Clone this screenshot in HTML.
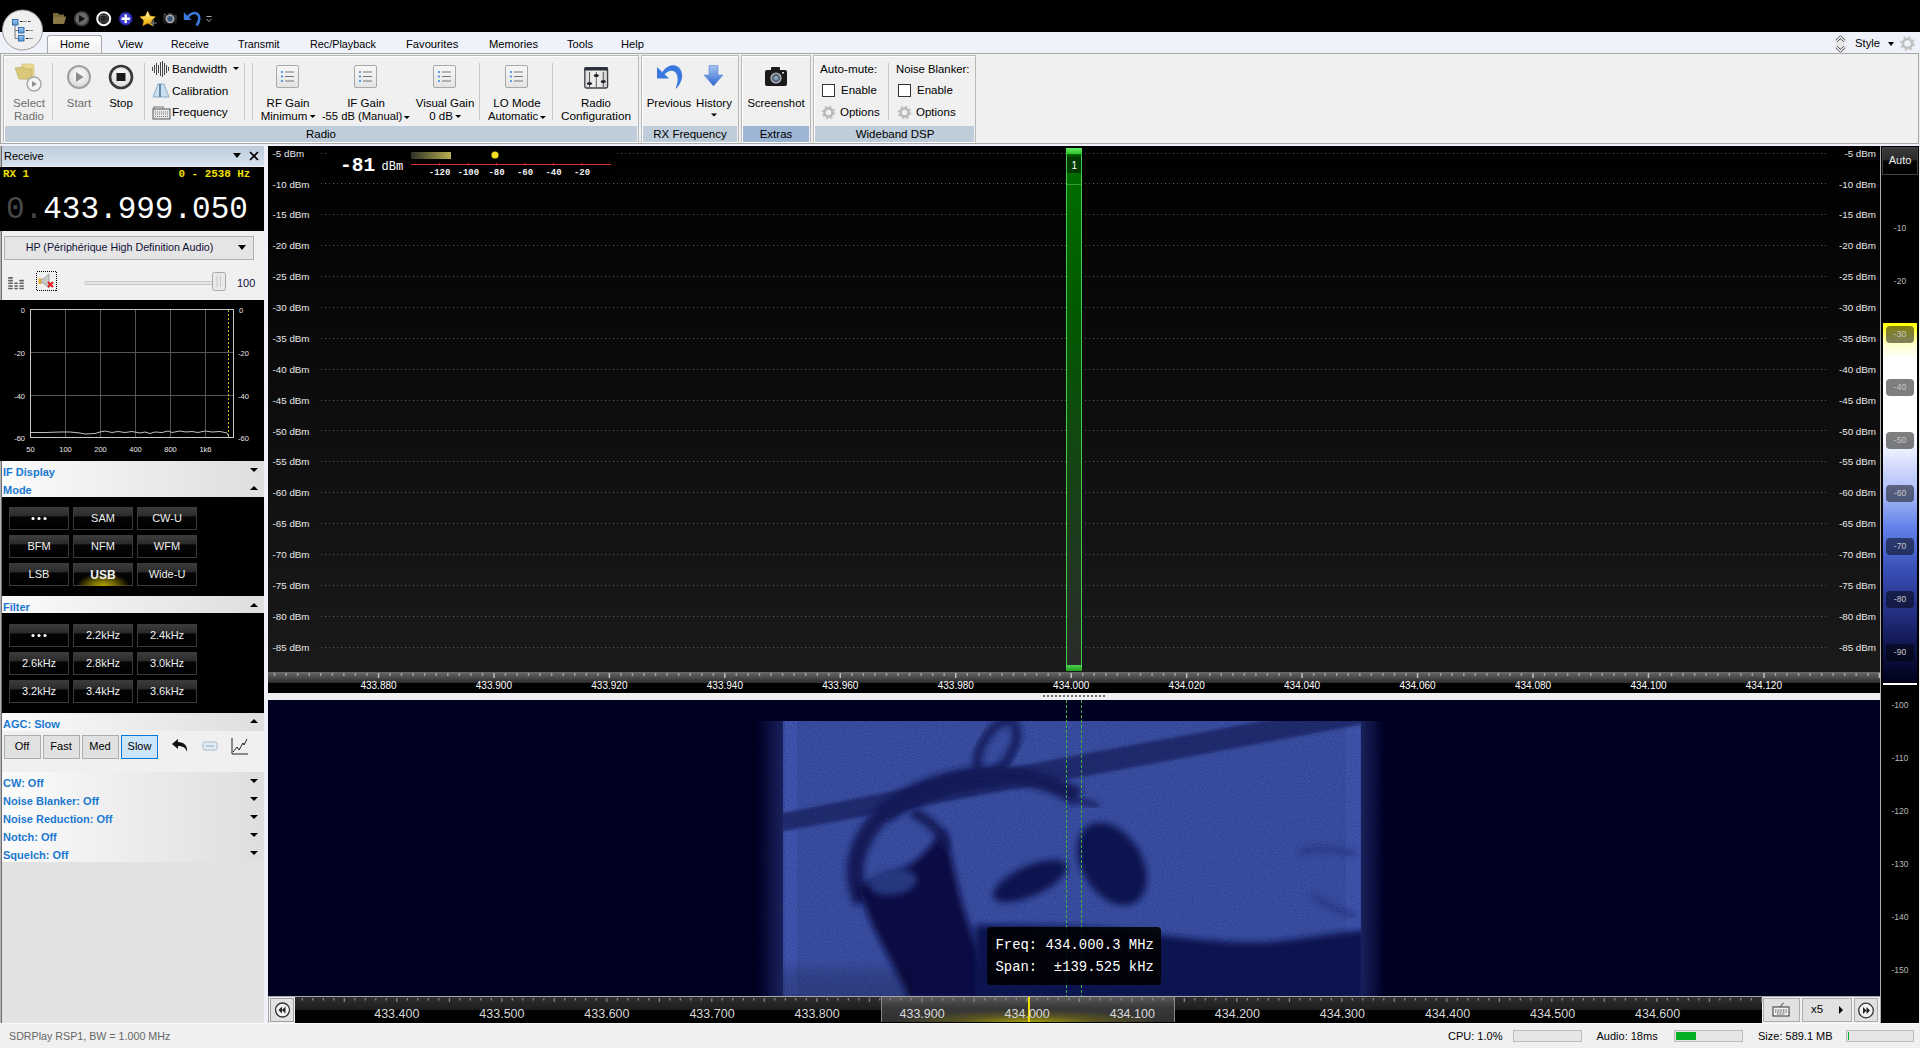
<!DOCTYPE html>
<html><head><meta charset="utf-8">
<style>
*{margin:0;padding:0;box-sizing:border-box}
html,body{width:1920px;height:1048px;overflow:hidden;background:#f0f0f0;font-family:"Liberation Sans",sans-serif;font-size:11.3px;color:#000}
.a{position:absolute}
.t{position:absolute;white-space:nowrap;line-height:1}
.c{transform:translateX(-50%)}
.mono{font-family:"Liberation Mono",monospace}
svg{position:absolute;overflow:visible}
#title{left:0;top:0;width:1920px;height:32px;background:#000}
#tabs{left:0;top:32px;width:1920px;height:21px;background:#eff2fb}
#ribbon{left:0;top:53px;width:1919px;height:91px;background:#f0f0f0;border:1px solid #a8a8a8}
.grp{position:absolute;top:1px;height:88px;border:1px solid #b8b8b8;border-bottom-color:#fff;box-shadow:inset 1px 1px 0 #fff}
.band{position:absolute;left:1px;right:1px;bottom:0;height:16px;background:#bfcddb;text-align:center;font-size:11.3px;line-height:15px}
.vsep{position:absolute;top:9px;width:1px;height:57px;background:#c8c8c8}
.arr{display:inline-block;width:0;height:0;border-left:3px solid transparent;border-right:3px solid transparent;border-top:3px solid #000;vertical-align:middle;margin-left:2px}
#left{left:0;top:146px;width:265px;height:879px;background:#f0f0f0}
#spec{left:268px;top:146px;width:1612px;height:526px;background:linear-gradient(#000 0%,#1a1a1a 100%)}
#fscale{left:268px;top:672px;width:1612px;height:21px;background:#000}
#sep{left:268px;top:693px;width:1612px;height:7px;background:#f0f0f0}
#wf{left:268px;top:700px;width:1612px;height:296px;background:#000020;overflow:hidden}
#bbar{left:268px;top:996px;width:1612px;height:27px;background:#f0f0f0}
#rcol{left:1881px;top:146px;width:38px;height:877px;background:#000}
#status{left:0;top:1023px;width:1920px;height:25px;background:#f0f0f0}
.mb{width:60px;height:23px;border:1px solid #3a3a3a;background:linear-gradient(#3c3c3c 0%,#2a2a2a 38%,#050505 42%,#000 100%)}
.ab{height:24px;background:#e1e1e1;border:1px solid #adadad}
</style></head><body>
<div id="title" class="a">
 <!-- quick access -->
 <svg style="left:50px;top:10px" width="170" height="20">
  <path d="M3 3 h5 l1 1.5 h5 v2 h2 l-2 7.5 H3z" fill="#7a6a40"/>
  <path d="M4 7 h12 l-2 6.5 H3z" fill="#8a7a48"/>
  <circle cx="31.7" cy="8.7" r="7" fill="#6a6a6a" stroke="#3a3a3a" stroke-width="1.5"/>
  <path d="M29 5 L35 8.7 L29 12.4z" fill="#111"/>
  <circle cx="53.7" cy="8.7" r="6.5" fill="#222" stroke="#fff" stroke-width="2"/>
  <rect x="50.5" y="5.5" width="6.5" height="6.5" fill="#222" stroke="#777" stroke-width="0.5"/>
  <circle cx="75.7" cy="8.7" r="6.5" fill="#3a3ac8" stroke="#1a1a80" stroke-width="1"/>
  <path d="M75.7 4.5 v8.4 M71.5 8.7 h8.4" stroke="#fff" stroke-width="2.4"/>
  <defs><linearGradient id="stg" x1="0" y1="0" x2="0" y2="1"><stop offset="0" stop-color="#fffbe8"/><stop offset="0.5" stop-color="#f8d040"/><stop offset="1" stop-color="#f0a000"/></linearGradient>
  <radialGradient id="cmg" cx="50%" cy="30%" r="70%"><stop offset="0" stop-color="#555"/><stop offset="1" stop-color="#111"/></radialGradient></defs>
  <path d="M97.7 1 l2.4 5 5.4 0.7 -3.9 3.8 1 5.3 -4.9 -2.6 -4.9 2.6 1 -5.3 -3.9 -3.8 5.4 -0.7z" fill="url(#stg)" stroke="#d89000" stroke-width="0.5"/>
  <path d="M100 13 h6.5 M103.2 9.8 v6.5" stroke="#6a6a6a" stroke-width="1.6"/>
  <rect x="113.2" y="4.4" width="13.7" height="9.7" rx="1.2" fill="url(#cmg)"/>
  <rect x="118" y="2.9" width="4.5" height="2" fill="#333"/>
  <rect x="113.8" y="3.8" width="2" height="1" fill="#666"/>
  <circle cx="120" cy="8.8" r="3.6" fill="#3a5a7a" stroke="#b0b0b0" stroke-width="1.5"/>
  <path d="M133.8 2.2 V9.9 H141.5z" fill="#3a7ae0"/>
  <path d="M137.5 7.5 C140 3.5 145 1.5 148 4.5 C150.5 7.5 149 12 146.5 15.5" fill="none" stroke="#3a7ae0" stroke-width="2.6"/>
  <path d="M156.5 6.5 h5 M156.5 9 l2.5 2.5 2.5 -2.5" stroke="#bbb" fill="none" stroke-width="0.9"/>
 </svg>
</div>
<div id="tabs" class="a">
 <div class="a" style="left:47px;top:3px;width:55px;height:19px;background:linear-gradient(#fff,#f0f0f0);border:1px solid #a8a8a8;border-bottom:none;border-radius:3px 3px 0 0"></div>
 <div class="t" style="left:60px;top:7px;font-size:11.1px">Home</div>
 <div class="t" style="left:118px;top:7px;font-size:11.5px">View</div>
 <div class="t" style="left:171px;top:7px;font-size:10.5px">Receive</div>
 <div class="t" style="left:238px;top:7px;font-size:10.8px">Transmit</div>
 <div class="t" style="left:310px;top:7px;font-size:10.8px">Rec/Playback</div>
 <div class="t" style="left:406px;top:7px;font-size:11.2px">Favourites</div>
 <div class="t" style="left:489px;top:7px;font-size:11.2px">Memories</div>
 <div class="t" style="left:567px;top:7px;font-size:11.2px">Tools</div>
 <div class="t" style="left:621px;top:7px;font-size:11.2px">Help</div>
 <svg style="left:1833px;top:2px" width="16" height="20">
  <ellipse cx="7.5" cy="10" rx="5" ry="8" fill="#e6e6ea"/>
  <path d="M3.5 7 L7.5 3 L11.5 7 M3.5 13 L7.5 17 L11.5 13" stroke="#444" fill="none" stroke-width="2.6" stroke-linejoin="round"/>
  <path d="M3.5 7 L7.5 3 L11.5 7 M3.5 13 L7.5 17 L11.5 13" stroke="#fff" fill="none" stroke-width="1.2" stroke-linejoin="round"/>
 </svg>
 <div class="t" style="left:1855px;top:6px;font-size:11.3px">Style</div>
 <div class="a" style="left:1888px;top:10px;border-left:3.5px solid transparent;border-right:3.5px solid transparent;border-top:4px solid #000"></div>
 <svg style="left:1899px;top:3px" width="18" height="18">
  <circle cx="8.5" cy="8.5" r="5.5" fill="none" stroke="#c8c8c8" stroke-width="4" stroke-dasharray="2.2 2.1"/>
  <circle cx="8.5" cy="8.5" r="4.5" fill="none" stroke="#c0c0c0" stroke-width="2.5"/>
 </svg>
</div>
<div class="a" style="left:0;top:0;z-index:5">
 <!-- app button -->
 <svg style="left:0;top:0" width="50" height="54">
  <defs><linearGradient id="sq" x1="0" y1="0" x2="0" y2="1"><stop offset="0" stop-color="#9cc8f0"/><stop offset="1" stop-color="#5a9ad8"/></linearGradient></defs>
  <circle cx="22.5" cy="30" r="20" fill="#efefef" stroke="#9a9a9a" stroke-width="1"/>
  <path d="M15 25 V38.5 H18.5 M15 30.5 H18.5" stroke="#666" fill="none" stroke-width="0.9"/>
  <rect x="12.5" y="19.5" width="5.5" height="5.5" fill="url(#sq)" stroke="#2a64a8" stroke-width="0.9"/>
  <rect x="18.5" y="27.5" width="5.5" height="5.5" fill="url(#sq)" stroke="#2a64a8" stroke-width="0.9"/>
  <rect x="18.5" y="35.5" width="5.5" height="5.5" fill="url(#sq)" stroke="#2a64a8" stroke-width="0.9"/>
  <path d="M20 21.5 H27 M28 21.5 H31 M26 30.5 H33 M26 38.5 H33" stroke="#777" fill="none" stroke-width="0.8"/>
  <path d="M20 21.5 H22 M28 21.5 H29.5 M26 30.5 H28 M26 38.5 H28" stroke="#222" fill="none" stroke-width="1"/>
 </svg>
</div>
<div id="ribbon" class="a"></div>
<div class="a" style="left:0;top:144px;width:1920px;height:2px;background:#eef0fa"></div>
<!-- groups -->
<div class="grp" style="left:3px;top:55px;width:636px"><div class="band"></div></div>
<div class="grp" style="left:641px;top:55px;width:98px"><div class="band"></div></div>
<div class="grp" style="left:741px;top:55px;width:70px"><div class="band" style="background:#9db6d4"></div></div>
<div class="grp" style="left:813px;top:55px;width:163px"><div class="band"></div></div>
<div class="t c" style="left:321px;top:129px;font-size:11.5px">Radio</div>
<div class="t c" style="left:690px;top:129px;font-size:11.5px">RX Frequency</div>
<div class="t c" style="left:776px;top:129px;font-size:11.5px">Extras</div>
<div class="t c" style="left:895px;top:129px;font-size:11.5px">Wideband DSP</div>
<div class="vsep" style="left:52px;top:63px"></div>
<div class="vsep" style="left:144px;top:63px"></div>
<div class="vsep" style="left:244px;top:63px"></div>
<div class="vsep" style="left:252px;top:63px"></div>
<div class="vsep" style="left:479px;top:63px"></div>
<div class="vsep" style="left:552px;top:63px"></div>
<div class="vsep" style="left:888px;top:63px"></div>
<!-- Select Radio -->
<svg style="left:14px;top:62px" width="30" height="30">
 <path d="M8 2 h10 l2 1 v14 H8z" fill="#e8d890" stroke="#c8b870" stroke-width="0.6"/>
 <path d="M1 6 l8 -1 3 2 H18 v10 H5z" fill="#d8c878" stroke="#b8a860" stroke-width="0.6"/>
 <circle cx="20" cy="22" r="7" fill="#f4f4f4" stroke="#a8a8a8" stroke-width="1.5"/>
 <path d="M18 19 l5 3 -5 3z" fill="#909090"/>
</svg>
<div class="t c" style="left:29px;top:98px;font-size:11.5px;color:#6d6d6d">Select</div>
<div class="t c" style="left:29px;top:111px;font-size:11.5px;color:#6d6d6d">Radio</div>
<!-- Start / Stop -->
<svg style="left:66px;top:64px" width="26" height="26">
 <defs><radialGradient id="gs" cx="50%" cy="40%" r="60%"><stop offset="0" stop-color="#fff"/><stop offset="1" stop-color="#d8d8d8"/></radialGradient></defs>
 <circle cx="13" cy="13" r="11" fill="url(#gs)" stroke="#a0a0a0" stroke-width="2"/>
 <path d="M10 8 l7.5 5 -7.5 5z" fill="#8a8a8a"/>
</svg>
<div class="t c" style="left:79px;top:98px;font-size:11.5px;color:#6d6d6d">Start</div>
<svg style="left:108px;top:64px" width="26" height="26">
 <circle cx="13" cy="13" r="11" fill="url(#gs)" stroke="#383838" stroke-width="2.6"/>
 <rect x="8.5" y="9" width="9" height="8" fill="#1a1a1a"/>
</svg>
<div class="t c" style="left:121px;top:98px;font-size:11.5px">Stop</div>
<!-- Bandwidth / Calibration / Frequency -->
<svg style="left:152px;top:61px" width="20" height="60">
 <path d="M0.5 6 v4 M2.5 4 v8 M4.5 2 v12 M6.5 4 v8 M8.5 1 v14 M10.5 0 v16 M12.5 2 v12 M14.5 4 v8 M16.5 6 v4" stroke="#333" stroke-width="0.9"/>
 <path d="M1 36 l5 -13 h6 l5 13z" fill="#c8e0f0" stroke="#7aa0c0" stroke-width="0.8"/>
 <path d="M8 23 v13" stroke="#4a7090" stroke-width="1.5"/>
 <rect x="1" y="48" width="17" height="10" fill="#e8e8e8" stroke="#555" stroke-width="1"/>
 <path d="M3 51 h13 M3 53 h13 M3 55.5 h13" stroke="#777" stroke-width="1" stroke-dasharray="1 1"/>
 <path d="M2 48 v-2 h9 v2" stroke="#777" fill="none" stroke-width="1.2"/>
</svg>
<div class="t" style="left:172px;top:63.5px;font-size:11.8px">Bandwidth</div>
<div class="a" style="left:233px;top:67px;border-left:3px solid transparent;border-right:3px solid transparent;border-top:3.5px solid #000"></div>
<div class="t" style="left:172px;top:86px;font-size:11.8px">Calibration</div>
<div class="t" style="left:172px;top:107px;font-size:11.8px">Frequency</div>
<!-- list icons -->
<svg style="left:276px;top:65px" width="350" height="24">
 <defs><linearGradient id="li" x1="0" y1="0" x2="0" y2="1"><stop offset="0" stop-color="#f8f8f8"/><stop offset="1" stop-color="#e4e4e4"/></linearGradient>
 <g id="lic"><rect x="0.5" y="0.5" width="22" height="22" rx="1.5" fill="url(#li)" stroke="#a8a8a8"/><circle cx="6" cy="7" r="1.1" fill="#3a8ae0"/><circle cx="6" cy="11.5" r="1.1" fill="#3a8ae0"/><circle cx="6" cy="16" r="1.1" fill="#3a8ae0"/><path d="M9 7 h9 M9 11.5 h9 M9 16 h9" stroke="#777" stroke-width="1"/></g></defs>
 <use href="#lic" x="0" y="0"/>
 <use href="#lic" x="78" y="0"/>
 <use href="#lic" x="157" y="0"/>
 <use href="#lic" x="229" y="0"/>
 <defs><linearGradient id="rc" x1="0" x2="1"><stop offset="0" stop-color="#d8d8d8"/><stop offset="0.5" stop-color="#f4f4f4"/><stop offset="1" stop-color="#d0d0d0"/></linearGradient></defs>
 <rect x="308.8" y="2.6" width="22.8" height="20.4" rx="1.5" fill="url(#rc)" stroke="#3a3f48" stroke-width="1.3"/>
 <rect x="308.5" y="2.2" width="23.4" height="3.2" rx="1" fill="#2a3038"/>
 <path d="M313.5 7 v15 M320.3 7 v15 M327.3 7 v15" stroke="#444" stroke-width="0.9"/>
 <ellipse cx="313.5" cy="18.5" rx="2.6" ry="1.6" fill="#222"/>
 <ellipse cx="320.3" cy="10.5" rx="2.6" ry="1.6" fill="#222"/>
 <ellipse cx="327.3" cy="16.5" rx="2.6" ry="1.6" fill="#222"/>
</svg>
<div class="t c" style="left:288px;top:98px;font-size:11.5px">RF Gain</div>
<div class="t c" style="left:288px;top:111px;font-size:11.5px">Minimum<span class="arr"></span></div>
<div class="t c" style="left:366px;top:98px;font-size:11.5px">IF Gain</div>
<div class="t c" style="left:366px;top:111px;font-size:11.2px">-55 dB (Manual)<span class="arr"></span></div>
<div class="t c" style="left:445px;top:98px;font-size:11.5px">Visual Gain</div>
<div class="t c" style="left:445px;top:111px;font-size:11.5px">0 dB<span class="arr"></span></div>
<div class="t c" style="left:517px;top:98px;font-size:11.5px">LO Mode</div>
<div class="t c" style="left:517px;top:111px;font-size:11.3px">Automatic<span class="arr"></span></div>
<div class="t c" style="left:596px;top:98px;font-size:11.5px">Radio</div>
<div class="t c" style="left:596px;top:111px;font-size:11.8px">Configuration</div>
<!-- RX Frequency -->
<svg style="left:654px;top:63px" width="75" height="60">
 <defs><linearGradient id="hg" x1="0" y1="0" x2="0" y2="1"><stop offset="0" stop-color="#a8c4f0"/><stop offset="1" stop-color="#2a68d0"/></linearGradient></defs>
 <path d="M3 4 V15.5 H15z" fill="#3a7ae0"/>
 <path d="M7 12 C10 4 16 1.8 20 2.2 C26 3 29 9 28 15 C27 20 24 24 21.5 26 C23.5 21 24.5 15 22.5 11 C20.5 7 15.5 6.5 11 11 Z" fill="#3a7ae0"/>
 <path d="M55 2.5 h9 v9.5 h5 l-9.5 11 -9.5 -11 h5z" fill="url(#hg)" stroke="#5a88d0" stroke-width="0.6"/>
 <path d="M57 50.5 h6 l-3 3z" fill="#000"/>
</svg>
<div class="t c" style="left:669px;top:98px;font-size:11.5px">Previous</div>
<div class="t c" style="left:714px;top:98px;font-size:11.5px">History</div>
<!-- Extras -->
<svg style="left:764px;top:66px" width="26" height="22">
 <rect x="1" y="4" width="22" height="16" rx="2" fill="#1a1a1a"/>
 <rect x="7" y="1" width="9" height="4" rx="1" fill="#1a1a1a"/>
 <circle cx="12" cy="12" r="5" fill="#5a6a7a" stroke="#c0c0c0" stroke-width="1.2"/>
 <circle cx="12" cy="12" r="2" fill="#8aa8c8"/>
 <rect x="18" y="6" width="2" height="1.5" fill="#ddd"/>
</svg>
<div class="t c" style="left:776px;top:98px;font-size:11.3px">Screenshot</div>
<!-- Wideband DSP -->
<div class="t" style="left:820px;top:63px;font-size:11.7px">Auto-mute:</div>
<div class="a" style="left:822px;top:84px;width:13px;height:13px;background:#fff;border:1px solid #333"></div>
<div class="t" style="left:841px;top:85.3px;font-size:11.5px">Enable</div>
<div class="t" style="left:840px;top:107.3px;font-size:11.5px">Options</div>
<div class="t" style="left:896px;top:64px;font-size:11.3px">Noise Blanker:</div>
<div class="a" style="left:898px;top:84px;width:13px;height:13px;background:#fff;border:1px solid #333"></div>
<div class="t" style="left:917px;top:85.3px;font-size:11.5px">Enable</div>
<div class="t" style="left:916px;top:107.3px;font-size:11.5px">Options</div>
<svg style="left:821px;top:105px" width="100" height="16">
 <g id="gear"><circle cx="7.5" cy="7.5" r="5" fill="none" stroke="#c4c4c4" stroke-width="3.6" stroke-dasharray="2.1 1.8"/><circle cx="7.5" cy="7.5" r="4" fill="none" stroke="#b8b8b8" stroke-width="2.4"/></g>
 <use href="#gear" x="76" y="0"/>
</svg>
<div id="left" class="a"></div>
<div class="a" style="left:0;top:146px;width:1px;height:877px;background:#b4b4b4"></div><div class="a" style="left:1px;top:146px;width:1px;height:877px;background:#6e6e6e"></div>
<div class="a" style="left:264px;top:146px;width:4px;height:877px;background:#eef0fa"></div>
<!-- Receive header -->
<div class="a" style="left:2px;top:146px;width:262px;height:20px;background:linear-gradient(#bdcbd9,#d6e2ee)"></div>
<div class="t" style="left:4px;top:150.5px;font-size:11px">Receive</div>
<div class="a" style="left:233px;top:153px;border-left:4.5px solid transparent;border-right:4.5px solid transparent;border-top:5px solid #000"></div>
<svg style="left:249px;top:151px" width="10" height="10"><path d="M1 1 L9 9 M9 1 L1 9" stroke="#000" stroke-width="1.6"/></svg>
<!-- RX display -->
<div class="a" style="left:0;top:167px;width:264px;height:64px;background:#000"></div>
<div class="t mono" style="left:3px;top:168.5px;font-size:10.8px;font-weight:bold;color:#f0e000">RX 1</div>
<div class="t mono" style="left:178.5px;top:168.5px;font-size:10.9px;font-weight:bold;color:#f0e000">0 - 2538 Hz</div>
<div class="t mono" style="left:6px;top:194px;font-size:31px;color:#fff;letter-spacing:0"><span style="color:#484848">0.</span>433.999.050</div>
<!-- audio dropdown -->
<div class="a" style="left:4px;top:236px;width:250px;height:24px;background:#e5e5e5;border:1px solid #adadad"></div>
<div class="t c" style="left:119.5px;top:242px;font-size:10.7px;color:#101038">HP (Périphérique High Definition Audio)</div>
<div class="a" style="left:238px;top:245px;border-left:4.5px solid transparent;border-right:4.5px solid transparent;border-top:5px solid #000"></div>
<!-- icons row -->
<svg style="left:7px;top:270px" width="250" height="24">
 <rect x="1.0" y="7.1" width="5.0" height="1.6" rx="0.8" fill="#606060"/>
 <rect x="1.0" y="9.8" width="5.0" height="1.6" rx="0.8" fill="#606060"/>
 <rect x="1.0" y="12.5" width="5.0" height="1.6" rx="0.8" fill="#606060"/>
 <rect x="1.0" y="15.2" width="5.0" height="1.6" rx="0.8" fill="#606060"/>
 <rect x="1.0" y="17.7" width="5.0" height="1.6" rx="0.8" fill="#606060"/>
 <rect x="7.2" y="12.5" width="3.8" height="1.6" rx="0.8" fill="#606060"/>
 <rect x="7.2" y="15.2" width="3.8" height="1.6" rx="0.8" fill="#606060"/>
 <rect x="7.2" y="17.7" width="3.8" height="1.6" rx="0.8" fill="#606060"/>
 <rect x="12.2" y="9.8" width="4.8" height="1.6" rx="0.8" fill="#606060"/>
 <rect x="12.2" y="12.5" width="4.8" height="1.6" rx="0.8" fill="#606060"/>
 <rect x="12.2" y="15.2" width="4.8" height="1.6" rx="0.8" fill="#606060"/>
 <rect x="12.2" y="17.7" width="4.8" height="1.6" rx="0.8" fill="#606060"/>
 <rect x="29.5" y="1.5" width="20" height="19" fill="none" stroke="#000" stroke-width="1" stroke-dasharray="1 1" shape-rendering="crispEdges"/>
 <path d="M34 9 h2 l6 -5 v14 l-6 -5 h-2z" fill="#c8c8c8" stroke="#888" stroke-width="0.6"/>
 <path d="M31.5 8.5 h2.5 v5.5 h-2.5z" fill="#e8b020"/>
 <path d="M41 12 l5 5 M46 12 l-5 5" stroke="#e02020" stroke-width="2"/>
 <rect x="78" y="11.5" width="141" height="3" rx="1.5" fill="#e6e6e6" stroke="#bcbcbc" stroke-width="0.8"/>
 <rect x="205.5" y="2.5" width="13" height="18" rx="2" fill="#e8e8e8" stroke="#aaa" stroke-width="1"/>
 <path d="M210 6 v11 M213.5 6 v11" stroke="#c8c8c8" stroke-width="1"/>
</svg>
<div class="t" style="left:237px;top:277.5px;font-size:11px;color:#101038">100</div>
<!-- IF display -->
<div class="a" style="left:0;top:300px;width:264px;height:161px;background:#000"></div>
<svg style="left:0;top:300px" width="264" height="161">
 <rect x="30.5" y="9.5" width="203" height="128" fill="none" stroke="#c8c8c8" stroke-width="1"/>
 <path d="M65.5 10 v127 M100.5 10 v127 M135.5 10 v127 M170.5 10 v127 M205.5 10 v127 M31 52.5 h202 M31 95.5 h202" stroke="#555" stroke-width="1"/>
 <path d="M228.5 10 v127" stroke="#d0c000" stroke-width="1" stroke-dasharray="2 2"/>
 <path d="M31 132.5 L45 132.5 L60 132 L70 132 L80 133 L85 134 L95 133.5 L100 132 L105 131 L112 132.5 L118 131.5 L125 132.5 L132 131.5 L140 133 L145 132 L150 133.5 L155 132 L162 132.5 L168 131 L172 132.5 L180 131 L186 132 L192 131.5 L198 132.5 L205 131 L212 132 L220 131.5 L227 133 L229 137" fill="none" stroke="#c0c0c0" stroke-width="1"/>
 <g font-family="Liberation Sans" font-size="7.5" fill="#e8e8e8">
  <text x="25" y="12.5" text-anchor="end">0</text>
  <text x="25" y="55.5" text-anchor="end">-20</text>
  <text x="25" y="98.5" text-anchor="end">-40</text>
  <text x="25" y="141" text-anchor="end">-60</text>
  <text x="239" y="12.5">0</text>
  <text x="238" y="55.5">-20</text>
  <text x="238" y="98.5">-40</text>
  <text x="238" y="141" >-60</text>
  <text x="30.5" y="151.5" text-anchor="middle">50</text>
  <text x="65.5" y="151.5" text-anchor="middle">100</text>
  <text x="100.5" y="151.5" text-anchor="middle">200</text>
  <text x="135.5" y="151.5" text-anchor="middle">400</text>
  <text x="170.5" y="151.5" text-anchor="middle">800</text>
  <text x="205.5" y="151.5" text-anchor="middle">1k6</text>
 </g>
</svg>
<!-- section headers -->
<div class="a" style="left:2px;top:461px;width:262px;height:36px;background:linear-gradient(90deg,#fbfbfb,#dedede)"></div>
<div class="t" style="left:3px;top:467px;font-size:11px;font-weight:bold;color:#1a78d0">IF Display</div>
<div class="a" style="left:250px;top:468px;border-left:4px solid transparent;border-right:4px solid transparent;border-top:4px solid #000"></div>
<div class="t" style="left:3px;top:485px;font-size:11px;font-weight:bold;color:#1a78d0">Mode</div>
<div class="a" style="left:250px;top:486px;border-left:4px solid transparent;border-right:4px solid transparent;border-bottom:4px solid #000"></div>
<!-- mode -->
<div class="a" style="left:2px;top:497px;width:262px;height:99px;background:#000"></div>
<div class="a mb" style="left:9px;top:507px"></div>
<svg style="left:9px;top:507px" width="60" height="23"><circle cx="24" cy="11.5" r="1.6" fill="#fff"/><circle cx="30" cy="11.5" r="1.6" fill="#fff"/><circle cx="36" cy="11.5" r="1.6" fill="#fff"/></svg>
<div class="a mb" style="left:73px;top:507px"></div>
<div class="t c" style="left:103px;top:512.5px;font-size:11px;color:#f0f0f0;font-weight:normal">SAM</div>
<div class="a mb" style="left:137px;top:507px"></div>
<div class="t c" style="left:167px;top:512.5px;font-size:11px;color:#f0f0f0;font-weight:normal">CW-U</div>
<div class="a mb" style="left:9px;top:535px"></div>
<div class="t c" style="left:39px;top:540.5px;font-size:11px;color:#f0f0f0;font-weight:normal">BFM</div>
<div class="a mb" style="left:73px;top:535px"></div>
<div class="t c" style="left:103px;top:540.5px;font-size:11px;color:#f0f0f0;font-weight:normal">NFM</div>
<div class="a mb" style="left:137px;top:535px"></div>
<div class="t c" style="left:167px;top:540.5px;font-size:11px;color:#f0f0f0;font-weight:normal">WFM</div>
<div class="a mb" style="left:9px;top:563px"></div>
<div class="t c" style="left:39px;top:568.5px;font-size:11px;color:#f0f0f0;font-weight:normal">LSB</div>
<div class="a mb" style="left:73px;top:563px"></div><div class="a" style="left:73px;top:563px;width:60px;height:23px;background:radial-gradient(ellipse 45% 55% at 50% 100%,#b8a800 0%,#6a6000 50%,rgba(0,0,0,0) 100%)"></div>
<div class="t c" style="left:103px;top:568.5px;font-size:12px;color:#f0f0f0;font-weight:bold">USB</div>
<div class="a mb" style="left:137px;top:563px"></div>
<div class="t c" style="left:167px;top:568.5px;font-size:11px;color:#f0f0f0;font-weight:normal">Wide-U</div>
<div class="a" style="left:2px;top:596px;width:262px;height:17px;background:linear-gradient(90deg,#fbfbfb,#dedede)"></div>
<div class="t" style="left:3px;top:602px;font-size:11px;font-weight:bold;color:#1a78d0">Filter</div>
<div class="a" style="left:250px;top:603px;border-left:4px solid transparent;border-right:4px solid transparent;border-bottom:4px solid #000"></div>
<div class="a" style="left:2px;top:613px;width:262px;height:100px;background:#000"></div>
<div class="a mb" style="left:9px;top:624px"></div>
<svg style="left:9px;top:624px" width="60" height="23"><circle cx="24" cy="11.5" r="1.6" fill="#fff"/><circle cx="30" cy="11.5" r="1.6" fill="#fff"/><circle cx="36" cy="11.5" r="1.6" fill="#fff"/></svg>
<div class="a mb" style="left:73px;top:624px"></div>
<div class="t c" style="left:103px;top:629.5px;font-size:11px;color:#f0f0f0;font-weight:normal">2.2kHz</div>
<div class="a mb" style="left:137px;top:624px"></div>
<div class="t c" style="left:167px;top:629.5px;font-size:11px;color:#f0f0f0;font-weight:normal">2.4kHz</div>
<div class="a mb" style="left:9px;top:652px"></div>
<div class="t c" style="left:39px;top:657.5px;font-size:11px;color:#f0f0f0;font-weight:normal">2.6kHz</div>
<div class="a mb" style="left:73px;top:652px"></div>
<div class="t c" style="left:103px;top:657.5px;font-size:11px;color:#f0f0f0;font-weight:normal">2.8kHz</div>
<div class="a mb" style="left:137px;top:652px"></div>
<div class="t c" style="left:167px;top:657.5px;font-size:11px;color:#f0f0f0;font-weight:normal">3.0kHz</div>
<div class="a mb" style="left:9px;top:680px"></div>
<div class="t c" style="left:39px;top:685.5px;font-size:11px;color:#f0f0f0;font-weight:normal">3.2kHz</div>
<div class="a mb" style="left:73px;top:680px"></div>
<div class="t c" style="left:103px;top:685.5px;font-size:11px;color:#f0f0f0;font-weight:normal">3.4kHz</div>
<div class="a mb" style="left:137px;top:680px"></div>
<div class="t c" style="left:167px;top:685.5px;font-size:11px;color:#f0f0f0;font-weight:normal">3.6kHz</div><!-- AGC -->
<div class="a" style="left:2px;top:713px;width:262px;height:18px;background:linear-gradient(90deg,#fbfbfb,#dedede)"></div>
<div class="t" style="left:3px;top:719px;font-size:11px;font-weight:bold;color:#1a78d0">AGC: Slow</div>
<div class="a" style="left:250px;top:719px;border-left:4px solid transparent;border-right:4px solid transparent;border-bottom:4px solid #000"></div>
<div class="a ab" style="left:4px;top:735px;width:37px"></div>
<div class="a ab" style="left:43px;top:735px;width:37px"></div>
<div class="a ab" style="left:82px;top:735px;width:37px"></div>
<div class="a ab" style="left:121px;top:735px;width:37px;background:#cce4f7;border-color:#0078d7"></div>
<div class="t c" style="left:22px;top:741px;font-size:11px">Off</div>
<div class="t c" style="left:61px;top:741px;font-size:11px">Fast</div>
<div class="t c" style="left:100px;top:741px;font-size:11px">Med</div>
<div class="t c" style="left:139.5px;top:741px;font-size:11px">Slow</div>
<svg style="left:170px;top:737px" width="80" height="20">
 <path d="M2 7 L8 2 V5 C14 5 18 9 17 15 C16 11 13 9 8 9 V12z" fill="#111"/>
 <rect x="33" y="5" width="14" height="8" rx="2" fill="#e4ecf4" stroke="#a8b8c8" stroke-width="1"/>
 <path d="M36 9 h8" stroke="#b8c8d8" stroke-width="2"/>
 <path d="M62 1 v16 h16 M63 15 l4 -5 2 3 4 -7 1 2 3 -6" stroke="#222" fill="none" stroke-width="1"/>
</svg>
<!-- collapsed sections -->
<div class="a" style="left:2px;top:772px;width:262px;height:90px;background:linear-gradient(90deg,#fbfbfb,#dedede)"></div>
<div class="t" style="left:3px;top:777.5px;font-size:11px;font-weight:bold;color:#1a78d0">CW: Off</div>
<div class="t" style="left:3px;top:795.5px;font-size:11px;font-weight:bold;color:#1a78d0">Noise Blanker: Off</div>
<div class="t" style="left:3px;top:813.5px;font-size:11px;font-weight:bold;color:#1a78d0">Noise Reduction: Off</div>
<div class="t" style="left:3px;top:831.5px;font-size:11px;font-weight:bold;color:#1a78d0">Notch: Off</div>
<div class="t" style="left:3px;top:849.5px;font-size:11px;font-weight:bold;color:#1a78d0">Squelch: Off</div>
<div class="a" style="left:250px;top:779px;border-left:4px solid transparent;border-right:4px solid transparent;border-top:4px solid #000"></div>
<div class="a" style="left:250px;top:797px;border-left:4px solid transparent;border-right:4px solid transparent;border-top:4px solid #000"></div>
<div class="a" style="left:250px;top:815px;border-left:4px solid transparent;border-right:4px solid transparent;border-top:4px solid #000"></div>
<div class="a" style="left:250px;top:833px;border-left:4px solid transparent;border-right:4px solid transparent;border-top:4px solid #000"></div>
<div class="a" style="left:250px;top:851px;border-left:4px solid transparent;border-right:4px solid transparent;border-top:4px solid #000"></div>

<div class="a" style="left:2px;top:862px;width:262px;height:161px;background:#e2e2e2"></div>
<div id="spec" class="a"></div>
<svg style="left:268px;top:146px" width="1612" height="526">
<path d="M52 7.5 H58 M348 7.5 H1558" stroke="#5a5a5a" stroke-width="1" stroke-dasharray="1 3" stroke-dashoffset="-1"/>
<path d="M52 37.5 H1558" stroke="#5a5a5a" stroke-width="1" stroke-dasharray="1 3" stroke-dashoffset="-1"/>
<path d="M52 68.5 H1558" stroke="#5a5a5a" stroke-width="1" stroke-dasharray="1 3" stroke-dashoffset="-1"/>
<path d="M52 99.5 H1558" stroke="#5a5a5a" stroke-width="1" stroke-dasharray="1 3" stroke-dashoffset="-1"/>
<path d="M52 130.5 H1558" stroke="#5a5a5a" stroke-width="1" stroke-dasharray="1 3" stroke-dashoffset="-1"/>
<path d="M52 161.5 H1558" stroke="#5a5a5a" stroke-width="1" stroke-dasharray="1 3" stroke-dashoffset="-1"/>
<path d="M52 192.5 H1558" stroke="#5a5a5a" stroke-width="1" stroke-dasharray="1 3" stroke-dashoffset="-1"/>
<path d="M52 223.5 H1558" stroke="#5a5a5a" stroke-width="1" stroke-dasharray="1 3" stroke-dashoffset="-1"/>
<path d="M52 254.5 H1558" stroke="#5a5a5a" stroke-width="1" stroke-dasharray="1 3" stroke-dashoffset="-1"/>
<path d="M52 284.5 H1558" stroke="#5a5a5a" stroke-width="1" stroke-dasharray="1 3" stroke-dashoffset="-1"/>
<path d="M52 315.5 H1558" stroke="#5a5a5a" stroke-width="1" stroke-dasharray="1 3" stroke-dashoffset="-1"/>
<path d="M52 346.5 H1558" stroke="#5a5a5a" stroke-width="1" stroke-dasharray="1 3" stroke-dashoffset="-1"/>
<path d="M52 377.5 H1558" stroke="#5a5a5a" stroke-width="1" stroke-dasharray="1 3" stroke-dashoffset="-1"/>
<path d="M52 408.5 H1558" stroke="#5a5a5a" stroke-width="1" stroke-dasharray="1 3" stroke-dashoffset="-1"/>
<path d="M52 439.5 H1558" stroke="#5a5a5a" stroke-width="1" stroke-dasharray="1 3" stroke-dashoffset="-1"/>
<path d="M52 470.5 H1558" stroke="#5a5a5a" stroke-width="1" stroke-dasharray="1 3" stroke-dashoffset="-1"/>
<path d="M52 501.5 H1558" stroke="#5a5a5a" stroke-width="1" stroke-dasharray="1 3" stroke-dashoffset="-1"/>
</svg>
<div class="t" style="left:272.5px;top:148.7px;font-size:9.8px;color:#e8e8e8">-5 dBm</div>
<div class="t" style="right:44px;top:148.7px;font-size:9.8px;color:#e8e8e8">-5 dBm</div>
<div class="t" style="left:272.5px;top:179.6px;font-size:9.8px;color:#e8e8e8">-10 dBm</div>
<div class="t" style="right:44px;top:179.6px;font-size:9.8px;color:#e8e8e8">-10 dBm</div>
<div class="t" style="left:272.5px;top:210.4px;font-size:9.8px;color:#e8e8e8">-15 dBm</div>
<div class="t" style="right:44px;top:210.4px;font-size:9.8px;color:#e8e8e8">-15 dBm</div>
<div class="t" style="left:272.5px;top:241.3px;font-size:9.8px;color:#e8e8e8">-20 dBm</div>
<div class="t" style="right:44px;top:241.3px;font-size:9.8px;color:#e8e8e8">-20 dBm</div>
<div class="t" style="left:272.5px;top:272.2px;font-size:9.8px;color:#e8e8e8">-25 dBm</div>
<div class="t" style="right:44px;top:272.2px;font-size:9.8px;color:#e8e8e8">-25 dBm</div>
<div class="t" style="left:272.5px;top:303.1px;font-size:9.8px;color:#e8e8e8">-30 dBm</div>
<div class="t" style="right:44px;top:303.1px;font-size:9.8px;color:#e8e8e8">-30 dBm</div>
<div class="t" style="left:272.5px;top:333.9px;font-size:9.8px;color:#e8e8e8">-35 dBm</div>
<div class="t" style="right:44px;top:333.9px;font-size:9.8px;color:#e8e8e8">-35 dBm</div>
<div class="t" style="left:272.5px;top:364.8px;font-size:9.8px;color:#e8e8e8">-40 dBm</div>
<div class="t" style="right:44px;top:364.8px;font-size:9.8px;color:#e8e8e8">-40 dBm</div>
<div class="t" style="left:272.5px;top:395.7px;font-size:9.8px;color:#e8e8e8">-45 dBm</div>
<div class="t" style="right:44px;top:395.7px;font-size:9.8px;color:#e8e8e8">-45 dBm</div>
<div class="t" style="left:272.5px;top:426.6px;font-size:9.8px;color:#e8e8e8">-50 dBm</div>
<div class="t" style="right:44px;top:426.6px;font-size:9.8px;color:#e8e8e8">-50 dBm</div>
<div class="t" style="left:272.5px;top:457.4px;font-size:9.8px;color:#e8e8e8">-55 dBm</div>
<div class="t" style="right:44px;top:457.4px;font-size:9.8px;color:#e8e8e8">-55 dBm</div>
<div class="t" style="left:272.5px;top:488.3px;font-size:9.8px;color:#e8e8e8">-60 dBm</div>
<div class="t" style="right:44px;top:488.3px;font-size:9.8px;color:#e8e8e8">-60 dBm</div>
<div class="t" style="left:272.5px;top:519.2px;font-size:9.8px;color:#e8e8e8">-65 dBm</div>
<div class="t" style="right:44px;top:519.2px;font-size:9.8px;color:#e8e8e8">-65 dBm</div>
<div class="t" style="left:272.5px;top:550.1px;font-size:9.8px;color:#e8e8e8">-70 dBm</div>
<div class="t" style="right:44px;top:550.1px;font-size:9.8px;color:#e8e8e8">-70 dBm</div>
<div class="t" style="left:272.5px;top:581.0px;font-size:9.8px;color:#e8e8e8">-75 dBm</div>
<div class="t" style="right:44px;top:581.0px;font-size:9.8px;color:#e8e8e8">-75 dBm</div>
<div class="t" style="left:272.5px;top:611.8px;font-size:9.8px;color:#e8e8e8">-80 dBm</div>
<div class="t" style="right:44px;top:611.8px;font-size:9.8px;color:#e8e8e8">-80 dBm</div>
<div class="t" style="left:272.5px;top:642.7px;font-size:9.8px;color:#e8e8e8">-85 dBm</div>
<div class="t" style="right:44px;top:642.7px;font-size:9.8px;color:#e8e8e8">-85 dBm</div>
<div class="a" style="left:326px;top:147px;width:290px;height:33px;background:#000"></div>
<div class="t mono" style="left:340px;top:156.5px;font-size:19.5px;color:#fff;font-weight:bold">-81</div>
<div class="t mono" style="left:381.5px;top:161px;font-size:12px;color:#fff">dBm</div>
<div class="a" style="left:411px;top:151.5px;width:40px;height:7px;background:linear-gradient(90deg,#303028,#b8b050)"></div>
<svg style="left:400px;top:146px" width="230" height="34"><circle cx="95" cy="9" r="3.6" fill="#f0e020"/><path d="M11 18.5 H211" stroke="#e03030" stroke-width="1.2"/>
<path d="M39.6 17 v2.5" stroke="#e03030" stroke-width="1"/>
<path d="M68.3 17 v2.5" stroke="#e03030" stroke-width="1"/>
<path d="M96.5 17 v2.5" stroke="#e03030" stroke-width="1"/>
<path d="M125.0 17 v2.5" stroke="#e03030" stroke-width="1"/>
<path d="M153.5 17 v2.5" stroke="#e03030" stroke-width="1"/>
<path d="M182.0 17 v2.5" stroke="#e03030" stroke-width="1"/>
</svg>
<div class="t c mono" style="left:439.6px;top:169px;font-size:9px;color:#f0f0f0;font-weight:bold">-120</div>
<div class="t c mono" style="left:468.3px;top:169px;font-size:9px;color:#f0f0f0;font-weight:bold">-100</div>
<div class="t c mono" style="left:496.5px;top:169px;font-size:9px;color:#f0f0f0;font-weight:bold">-80</div>
<div class="t c mono" style="left:525.0px;top:169px;font-size:9px;color:#f0f0f0;font-weight:bold">-60</div>
<div class="t c mono" style="left:553.5px;top:169px;font-size:9px;color:#f0f0f0;font-weight:bold">-40</div>
<div class="t c mono" style="left:582.0px;top:169px;font-size:9px;color:#f0f0f0;font-weight:bold">-20</div>
<div class="a" style="left:1066px;top:148px;width:16px;height:523px;background:linear-gradient(#007000 0%,#005a00 30%,#1e3a1e 75%,#2a2a2a 100%);border-left:1px solid #44cc44;border-right:1px solid #44cc44"></div>
<div class="a" style="left:1066px;top:148px;width:16px;height:6px;background:linear-gradient(#60f060,#30c030)"></div>
<div class="a" style="left:1067px;top:155px;width:14px;height:3px;background:#005000"></div>
<div class="a" style="left:1067px;top:157px;width:14px;height:16px;background:#003a00"></div>
<div class="a" style="left:1067px;top:183.5px;width:14px;height:1px;background:#30a030"></div>
<div class="t" style="left:1071.5px;top:161px;font-size:10px;color:#fff">1</div>
<div class="a" style="left:1066px;top:665px;width:16px;height:6px;background:linear-gradient(#50d050,#20a020)"></div>
<div id="fscale" class="a"></div>
<div class="a" style="left:268px;top:672px;width:1612px;height:11px;background:linear-gradient(#6a6a6a,#2a2a2a)"></div>
<svg style="left:268px;top:672px" width="1612" height="12">
<rect x="5.8" y="1" width="1.5" height="3" fill="#a0a0a0"/>
<rect x="17.4" y="1" width="1.5" height="3" fill="#a0a0a0"/>
<rect x="28.9" y="1" width="1.5" height="3" fill="#a0a0a0"/>
<rect x="40.5" y="1" width="1.5" height="3" fill="#a0a0a0"/>
<rect x="52.0" y="1" width="1.5" height="3" fill="#a0a0a0"/>
<rect x="63.6" y="1" width="1.5" height="3" fill="#a0a0a0"/>
<rect x="75.1" y="1" width="1.5" height="3" fill="#a0a0a0"/>
<rect x="86.7" y="1" width="1.5" height="3" fill="#a0a0a0"/>
<rect x="98.2" y="1" width="1.5" height="3" fill="#a0a0a0"/>
<rect x="109.8" y="1" width="1.5" height="5" fill="#bdbdbd"/>
<rect x="121.3" y="1" width="1.5" height="3" fill="#a0a0a0"/>
<rect x="132.8" y="1" width="1.5" height="3" fill="#a0a0a0"/>
<rect x="144.4" y="1" width="1.5" height="3" fill="#a0a0a0"/>
<rect x="155.9" y="1" width="1.5" height="3" fill="#a0a0a0"/>
<rect x="167.5" y="1" width="1.5" height="3" fill="#a0a0a0"/>
<rect x="179.0" y="1" width="1.5" height="3" fill="#a0a0a0"/>
<rect x="190.6" y="1" width="1.5" height="3" fill="#a0a0a0"/>
<rect x="202.1" y="1" width="1.5" height="3" fill="#a0a0a0"/>
<rect x="213.7" y="1" width="1.5" height="3" fill="#a0a0a0"/>
<rect x="225.2" y="1" width="1.5" height="5" fill="#bdbdbd"/>
<rect x="236.7" y="1" width="1.5" height="3" fill="#a0a0a0"/>
<rect x="248.3" y="1" width="1.5" height="3" fill="#a0a0a0"/>
<rect x="259.8" y="1" width="1.5" height="3" fill="#a0a0a0"/>
<rect x="271.4" y="1" width="1.5" height="3" fill="#a0a0a0"/>
<rect x="282.9" y="1" width="1.5" height="3" fill="#a0a0a0"/>
<rect x="294.5" y="1" width="1.5" height="3" fill="#a0a0a0"/>
<rect x="306.0" y="1" width="1.5" height="3" fill="#a0a0a0"/>
<rect x="317.6" y="1" width="1.5" height="3" fill="#a0a0a0"/>
<rect x="329.1" y="1" width="1.5" height="3" fill="#a0a0a0"/>
<rect x="340.6" y="1" width="1.5" height="5" fill="#bdbdbd"/>
<rect x="352.2" y="1" width="1.5" height="3" fill="#a0a0a0"/>
<rect x="363.7" y="1" width="1.5" height="3" fill="#a0a0a0"/>
<rect x="375.3" y="1" width="1.5" height="3" fill="#a0a0a0"/>
<rect x="386.8" y="1" width="1.5" height="3" fill="#a0a0a0"/>
<rect x="398.4" y="1" width="1.5" height="3" fill="#a0a0a0"/>
<rect x="409.9" y="1" width="1.5" height="3" fill="#a0a0a0"/>
<rect x="421.5" y="1" width="1.5" height="3" fill="#a0a0a0"/>
<rect x="433.0" y="1" width="1.5" height="3" fill="#a0a0a0"/>
<rect x="444.6" y="1" width="1.5" height="3" fill="#a0a0a0"/>
<rect x="456.1" y="1" width="1.5" height="5" fill="#bdbdbd"/>
<rect x="467.6" y="1" width="1.5" height="3" fill="#a0a0a0"/>
<rect x="479.2" y="1" width="1.5" height="3" fill="#a0a0a0"/>
<rect x="490.7" y="1" width="1.5" height="3" fill="#a0a0a0"/>
<rect x="502.3" y="1" width="1.5" height="3" fill="#a0a0a0"/>
<rect x="513.8" y="1" width="1.5" height="3" fill="#a0a0a0"/>
<rect x="525.4" y="1" width="1.5" height="3" fill="#a0a0a0"/>
<rect x="536.9" y="1" width="1.5" height="3" fill="#a0a0a0"/>
<rect x="548.5" y="1" width="1.5" height="3" fill="#a0a0a0"/>
<rect x="560.0" y="1" width="1.5" height="3" fill="#a0a0a0"/>
<rect x="571.5" y="1" width="1.5" height="5" fill="#bdbdbd"/>
<rect x="583.1" y="1" width="1.5" height="3" fill="#a0a0a0"/>
<rect x="594.6" y="1" width="1.5" height="3" fill="#a0a0a0"/>
<rect x="606.2" y="1" width="1.5" height="3" fill="#a0a0a0"/>
<rect x="617.7" y="1" width="1.5" height="3" fill="#a0a0a0"/>
<rect x="629.3" y="1" width="1.5" height="3" fill="#a0a0a0"/>
<rect x="640.8" y="1" width="1.5" height="3" fill="#a0a0a0"/>
<rect x="652.4" y="1" width="1.5" height="3" fill="#a0a0a0"/>
<rect x="663.9" y="1" width="1.5" height="3" fill="#a0a0a0"/>
<rect x="675.5" y="1" width="1.5" height="3" fill="#a0a0a0"/>
<rect x="687.0" y="1" width="1.5" height="5" fill="#bdbdbd"/>
<rect x="698.5" y="1" width="1.5" height="3" fill="#a0a0a0"/>
<rect x="710.1" y="1" width="1.5" height="3" fill="#a0a0a0"/>
<rect x="721.6" y="1" width="1.5" height="3" fill="#a0a0a0"/>
<rect x="733.2" y="1" width="1.5" height="3" fill="#a0a0a0"/>
<rect x="744.7" y="1" width="1.5" height="3" fill="#a0a0a0"/>
<rect x="756.3" y="1" width="1.5" height="3" fill="#a0a0a0"/>
<rect x="767.8" y="1" width="1.5" height="3" fill="#a0a0a0"/>
<rect x="779.4" y="1" width="1.5" height="3" fill="#a0a0a0"/>
<rect x="790.9" y="1" width="1.5" height="3" fill="#a0a0a0"/>
<rect x="802.5" y="1" width="1.5" height="5" fill="#bdbdbd"/>
<rect x="814.0" y="1" width="1.5" height="3" fill="#a0a0a0"/>
<rect x="825.5" y="1" width="1.5" height="3" fill="#a0a0a0"/>
<rect x="837.1" y="1" width="1.5" height="3" fill="#a0a0a0"/>
<rect x="848.6" y="1" width="1.5" height="3" fill="#a0a0a0"/>
<rect x="860.2" y="1" width="1.5" height="3" fill="#a0a0a0"/>
<rect x="871.7" y="1" width="1.5" height="3" fill="#a0a0a0"/>
<rect x="883.3" y="1" width="1.5" height="3" fill="#a0a0a0"/>
<rect x="894.8" y="1" width="1.5" height="3" fill="#a0a0a0"/>
<rect x="906.4" y="1" width="1.5" height="3" fill="#a0a0a0"/>
<rect x="917.9" y="1" width="1.5" height="5" fill="#bdbdbd"/>
<rect x="929.4" y="1" width="1.5" height="3" fill="#a0a0a0"/>
<rect x="941.0" y="1" width="1.5" height="3" fill="#a0a0a0"/>
<rect x="952.5" y="1" width="1.5" height="3" fill="#a0a0a0"/>
<rect x="964.1" y="1" width="1.5" height="3" fill="#a0a0a0"/>
<rect x="975.6" y="1" width="1.5" height="3" fill="#a0a0a0"/>
<rect x="987.2" y="1" width="1.5" height="3" fill="#a0a0a0"/>
<rect x="998.7" y="1" width="1.5" height="3" fill="#a0a0a0"/>
<rect x="1010.3" y="1" width="1.5" height="3" fill="#a0a0a0"/>
<rect x="1021.8" y="1" width="1.5" height="3" fill="#a0a0a0"/>
<rect x="1033.3" y="1" width="1.5" height="5" fill="#bdbdbd"/>
<rect x="1044.9" y="1" width="1.5" height="3" fill="#a0a0a0"/>
<rect x="1056.4" y="1" width="1.5" height="3" fill="#a0a0a0"/>
<rect x="1068.0" y="1" width="1.5" height="3" fill="#a0a0a0"/>
<rect x="1079.5" y="1" width="1.5" height="3" fill="#a0a0a0"/>
<rect x="1091.1" y="1" width="1.5" height="3" fill="#a0a0a0"/>
<rect x="1102.6" y="1" width="1.5" height="3" fill="#a0a0a0"/>
<rect x="1114.2" y="1" width="1.5" height="3" fill="#a0a0a0"/>
<rect x="1125.7" y="1" width="1.5" height="3" fill="#a0a0a0"/>
<rect x="1137.3" y="1" width="1.5" height="3" fill="#a0a0a0"/>
<rect x="1148.8" y="1" width="1.5" height="5" fill="#bdbdbd"/>
<rect x="1160.3" y="1" width="1.5" height="3" fill="#a0a0a0"/>
<rect x="1171.9" y="1" width="1.5" height="3" fill="#a0a0a0"/>
<rect x="1183.4" y="1" width="1.5" height="3" fill="#a0a0a0"/>
<rect x="1195.0" y="1" width="1.5" height="3" fill="#a0a0a0"/>
<rect x="1206.5" y="1" width="1.5" height="3" fill="#a0a0a0"/>
<rect x="1218.1" y="1" width="1.5" height="3" fill="#a0a0a0"/>
<rect x="1229.6" y="1" width="1.5" height="3" fill="#a0a0a0"/>
<rect x="1241.2" y="1" width="1.5" height="3" fill="#a0a0a0"/>
<rect x="1252.7" y="1" width="1.5" height="3" fill="#a0a0a0"/>
<rect x="1264.2" y="1" width="1.5" height="5" fill="#bdbdbd"/>
<rect x="1275.8" y="1" width="1.5" height="3" fill="#a0a0a0"/>
<rect x="1287.3" y="1" width="1.5" height="3" fill="#a0a0a0"/>
<rect x="1298.9" y="1" width="1.5" height="3" fill="#a0a0a0"/>
<rect x="1310.4" y="1" width="1.5" height="3" fill="#a0a0a0"/>
<rect x="1322.0" y="1" width="1.5" height="3" fill="#a0a0a0"/>
<rect x="1333.5" y="1" width="1.5" height="3" fill="#a0a0a0"/>
<rect x="1345.1" y="1" width="1.5" height="3" fill="#a0a0a0"/>
<rect x="1356.6" y="1" width="1.5" height="3" fill="#a0a0a0"/>
<rect x="1368.2" y="1" width="1.5" height="3" fill="#a0a0a0"/>
<rect x="1379.7" y="1" width="1.5" height="5" fill="#bdbdbd"/>
<rect x="1391.2" y="1" width="1.5" height="3" fill="#a0a0a0"/>
<rect x="1402.8" y="1" width="1.5" height="3" fill="#a0a0a0"/>
<rect x="1414.3" y="1" width="1.5" height="3" fill="#a0a0a0"/>
<rect x="1425.9" y="1" width="1.5" height="3" fill="#a0a0a0"/>
<rect x="1437.4" y="1" width="1.5" height="3" fill="#a0a0a0"/>
<rect x="1449.0" y="1" width="1.5" height="3" fill="#a0a0a0"/>
<rect x="1460.5" y="1" width="1.5" height="3" fill="#a0a0a0"/>
<rect x="1472.1" y="1" width="1.5" height="3" fill="#a0a0a0"/>
<rect x="1483.6" y="1" width="1.5" height="3" fill="#a0a0a0"/>
<rect x="1495.2" y="1" width="1.5" height="5" fill="#bdbdbd"/>
<rect x="1506.7" y="1" width="1.5" height="3" fill="#a0a0a0"/>
<rect x="1518.2" y="1" width="1.5" height="3" fill="#a0a0a0"/>
<rect x="1529.8" y="1" width="1.5" height="3" fill="#a0a0a0"/>
<rect x="1541.3" y="1" width="1.5" height="3" fill="#a0a0a0"/>
<rect x="1552.9" y="1" width="1.5" height="3" fill="#a0a0a0"/>
<rect x="1564.4" y="1" width="1.5" height="3" fill="#a0a0a0"/>
<rect x="1576.0" y="1" width="1.5" height="3" fill="#a0a0a0"/>
<rect x="1587.5" y="1" width="1.5" height="3" fill="#a0a0a0"/>
<rect x="1599.1" y="1" width="1.5" height="3" fill="#a0a0a0"/>
<rect x="1610.6" y="1" width="1.5" height="5" fill="#bdbdbd"/>
</svg>
<div class="t c" style="left:378.5px;top:680.5px;font-size:10px;color:#fff">433.880</div>
<div class="t c" style="left:493.9px;top:680.5px;font-size:10px;color:#fff">433.900</div>
<div class="t c" style="left:609.4px;top:680.5px;font-size:10px;color:#fff">433.920</div>
<div class="t c" style="left:724.9px;top:680.5px;font-size:10px;color:#fff">433.940</div>
<div class="t c" style="left:840.3px;top:680.5px;font-size:10px;color:#fff">433.960</div>
<div class="t c" style="left:955.8px;top:680.5px;font-size:10px;color:#fff">433.980</div>
<div class="t c" style="left:1071.2px;top:680.5px;font-size:10px;color:#fff">434.000</div>
<div class="t c" style="left:1186.7px;top:680.5px;font-size:10px;color:#fff">434.020</div>
<div class="t c" style="left:1302.1px;top:680.5px;font-size:10px;color:#fff">434.040</div>
<div class="t c" style="left:1417.5px;top:680.5px;font-size:10px;color:#fff">434.060</div>
<div class="t c" style="left:1533.0px;top:680.5px;font-size:10px;color:#fff">434.080</div>
<div class="t c" style="left:1648.5px;top:680.5px;font-size:10px;color:#fff">434.100</div>
<div class="t c" style="left:1763.9px;top:680.5px;font-size:10px;color:#fff">434.120</div>
<div id="sep" class="a"></div>
<svg style="left:1040px;top:694px" width="70" height="5"><path d="M3 2 H66" stroke="#707070" stroke-width="2" stroke-dasharray="2 2"/></svg><div id="wf" class="a">
<svg style="left:0;top:0" width="1612" height="296">
 <defs>
  <filter id="bl" x="-20%" y="-20%" width="140%" height="140%"><feGaussianBlur stdDeviation="3"/></filter>
  <filter id="bl1" x="-20%" y="-20%" width="140%" height="140%"><feGaussianBlur stdDeviation="1.5"/></filter>
  <filter id="bl2" x="-20%" y="-20%" width="140%" height="140%"><feGaussianBlur stdDeviation="6"/></filter>
  <filter id="nz" x="0" y="0" width="100%" height="100%">
   <feTurbulence type="fractalNoise" baseFrequency="0.9" numOctaves="1" seed="3" result="n"/>
   <feColorMatrix in="n" type="matrix" values="0 0 0 0 0  0 0 0 0 0  0 0 0 0 0.1  0 0 0 -1.6 1.05" result="m"/>
   <feComposite in="m" in2="SourceGraphic" operator="in"/>
  </filter>
  <linearGradient id="fl" x1="0" x2="1"><stop offset="0" stop-color="#3a4e9e" stop-opacity="0"/><stop offset="1" stop-color="#3a4e9e" stop-opacity="0.5"/></linearGradient>
  <linearGradient id="fr" x1="0" x2="1"><stop offset="0" stop-color="#3a4e9e" stop-opacity="0.5"/><stop offset="1" stop-color="#3a4e9e" stop-opacity="0"/></linearGradient>
 <linearGradient id="bdk" x1="0" y1="0" x2="0" y2="1"><stop offset="0" stop-color="#000" stop-opacity="0"/><stop offset="0.4" stop-color="#000" stop-opacity="0.15"/><stop offset="1" stop-color="#000" stop-opacity="0.2"/></linearGradient>
 </defs>
 <g transform="translate(-268,-700)">
  <rect x="757" y="721" width="27" height="275" fill="url(#fl)"/>
  <rect x="1360" y="721" width="24" height="275" fill="url(#fr)"/>
  <rect x="783" y="721" width="578" height="275" fill="#3d52a2"/>
  <rect x="785" y="721" width="12" height="275" fill="#4a5eb8" opacity="0.6"/>
  <rect x="1346" y="721" width="14" height="275" fill="#4a5eb8" opacity="0.5"/>
  <clipPath id="ic"><rect x="783" y="721" width="578" height="275"/></clipPath>
  <g clip-path="url(#ic)">
   <!-- diagonal band -->
   <path d="M770 815.5 L1080 754.5 L1390 698 L1390 719 L1080 777.2 L770 833.5 Z" fill="#222f6e" filter="url(#bl1)"/>
   <!-- top loop -->
   <ellipse cx="997" cy="748" rx="15" ry="30" transform="rotate(30 997 748)" fill="none" stroke="#18225e" stroke-width="9" filter="url(#bl)"/>
   <!-- headband arc -->
   <path d="M1078 797 C1040 774 990 770 950 780 C910 790 880 810 866 835 C852 858 853 882 862 902" fill="none" stroke="#121a56" stroke-width="17" filter="url(#bl)"/>
   <path d="M1070 798 L1098 806" fill="none" stroke="#1a2462" stroke-width="6" filter="url(#bl)"/>
   <path d="M885 815 C915 795 960 782 1005 778" fill="none" stroke="#121a56" stroke-width="14" filter="url(#bl)"/>
   <!-- dark mass: ear cup right + neck -->
   <path d="M858 886 C880 878 905 872 922 855 C932 845 940 835 944 828 C952 855 957 890 968 922 C980 955 990 980 994 1000 L910 1000 C895 965 870 930 858 886 Z" fill="#0a1042" filter="url(#bl)"/>
   <path d="M912 812 C930 820 942 832 946 848" fill="none" stroke="#121a56" stroke-width="10" filter="url(#bl)"/>
   <rect x="783" y="960" width="130" height="40" fill="url(#bdk)"/>
   <!-- lighter inner ellipse of ear cup -->
   <ellipse cx="893" cy="882" rx="24" ry="13" transform="rotate(-8 893 882)" fill="#2c3c84" filter="url(#bl)"/>
   <!-- eye -->
   <ellipse cx="1030" cy="881" rx="40" ry="15" transform="rotate(-24 1030 881)" fill="#101850" filter="url(#bl)"/>
   <!-- right blob -->
   <ellipse cx="1112" cy="864" rx="30" ry="45" transform="rotate(-32 1112 864)" fill="#101850" filter="url(#bl)"/>
   <!-- lower dark region -->
   <path d="M975 925 C1050 925 1100 926 1160 935 C1200 940 1240 944 1270 942 C1310 938 1340 932 1365 930 L1365 1000 L975 1000Z" fill="#0f1650" filter="url(#bl)"/>
   <!-- right features -->
   <path d="M1300 852 C1320 846 1340 850 1356 854 M1312 895 C1325 905 1338 912 1356 915" stroke="#2a3a84" stroke-width="5" fill="none" filter="url(#bl)"/>
  </g>
  <rect x="757" y="721" width="629" height="275" fill="#fff" filter="url(#nz)" opacity="0.35"/>
 </g>
</svg>
</div>
<!-- dashed markers -->
<svg style="left:1060px;top:700px" width="30" height="296"><path d="M6.5 0 V296 M21.5 0 V296" stroke="#40b040" stroke-width="1" stroke-dasharray="3 2"/></svg>
<!-- tooltip -->
<div class="a" style="left:987px;top:927px;width:174px;height:58px;background:rgba(0,0,0,0.88);border-radius:4px"></div>
<div class="t mono" style="left:995.5px;top:938.5px;font-size:13.9px;color:#fff">Freq: 434.000.3 MHz</div>
<div class="t mono" style="left:995.5px;top:961px;font-size:13.9px;color:#fff">Span:&nbsp; ±139.525 kHz</div>
<div id="rcol" class="a"></div>
<div class="a" style="left:1880px;top:146px;width:1px;height:877px;background:#b0b0b0"></div>
<div class="a" style="left:1882px;top:147px;width:36px;height:28px;background:linear-gradient(#3a3a3a 0%,#2a2a2a 45%,#050505 50%,#000 100%);border:1px solid #404040"></div>
<div class="t c" style="left:1900px;top:155px;font-size:11px;color:#f0f0f0">Auto</div>
<div class="a" style="left:1883px;top:323px;width:34px;height:361px;background:linear-gradient(#ffff00 0%,#ffffd0 6%,#ffffff 10%,#ffffff 30%,#e8ecff 36%,#b0c0f8 46%,#6080e8 57%,#3a50b8 68%,#202a78 82%,#0c1040 92%,#000018 100%)"></div>
<div class="a" style="left:1883px;top:683px;width:34px;height:1.5px;background:#fff"></div>
<div class="t c" style="left:1900px;top:223.5px;font-size:8.5px;color:#b8b8b8">-10</div>
<div class="t c" style="left:1900px;top:276.5px;font-size:8.5px;color:#b8b8b8">-20</div>
<div class="a" style="left:1886px;top:326px;width:28px;height:17px;border-radius:4px;background:rgba(0,0,0,0.5)"></div>
<div class="t c" style="left:1900px;top:329.5px;font-size:8.5px;color:#c8c8c8">-30</div>
<div class="a" style="left:1886px;top:379px;width:28px;height:17px;border-radius:4px;background:rgba(0,0,0,0.5)"></div>
<div class="t c" style="left:1900px;top:382.5px;font-size:8.5px;color:#c8c8c8">-40</div>
<div class="a" style="left:1886px;top:432px;width:28px;height:17px;border-radius:4px;background:rgba(0,0,0,0.5)"></div>
<div class="t c" style="left:1900px;top:435.5px;font-size:8.5px;color:#c8c8c8">-50</div>
<div class="a" style="left:1886px;top:485px;width:28px;height:17px;border-radius:4px;background:rgba(0,0,0,0.5)"></div>
<div class="t c" style="left:1900px;top:488.5px;font-size:8.5px;color:#c8c8c8">-60</div>
<div class="a" style="left:1886px;top:538px;width:28px;height:17px;border-radius:4px;background:rgba(0,0,0,0.5)"></div>
<div class="t c" style="left:1900px;top:541.5px;font-size:8.5px;color:#c8c8c8">-70</div>
<div class="a" style="left:1886px;top:591px;width:28px;height:17px;border-radius:4px;background:rgba(0,0,0,0.5)"></div>
<div class="t c" style="left:1900px;top:594.5px;font-size:8.5px;color:#c8c8c8">-80</div>
<div class="a" style="left:1886px;top:644px;width:28px;height:17px;border-radius:4px;background:rgba(0,0,0,0.5)"></div>
<div class="t c" style="left:1900px;top:647.5px;font-size:8.5px;color:#c8c8c8">-90</div>
<div class="t c" style="left:1900px;top:700.5px;font-size:8.5px;color:#b8b8b8">-100</div>
<div class="t c" style="left:1900px;top:753.5px;font-size:8.5px;color:#b8b8b8">-110</div>
<div class="t c" style="left:1900px;top:806.5px;font-size:8.5px;color:#b8b8b8">-120</div>
<div class="t c" style="left:1900px;top:859.5px;font-size:8.5px;color:#b8b8b8">-130</div>
<div class="t c" style="left:1900px;top:912.5px;font-size:8.5px;color:#b8b8b8">-140</div>
<div class="t c" style="left:1900px;top:965.5px;font-size:8.5px;color:#b8b8b8">-150</div><div id="bbar" class="a"></div>
<div class="a" style="left:268px;top:996px;width:1612px;height:1px;background:#a8a8a8"></div><div class="a" style="left:268px;top:996px;width:1px;height:27px;background:#a8a8a8"></div>
<div class="a" style="left:270px;top:998px;width:24px;height:24px;background:#e2e2e2;border:1px solid #a0a0a0"></div>
<svg style="left:273px;top:1001px" width="20" height="20"><circle cx="9.5" cy="9" r="7" fill="#f4f4f4" stroke="#333" stroke-width="1.3"/><path d="M9 5.5 L5.5 9 L9 12.5z M12.5 5.5 L9 9 L12.5 12.5z" fill="#222"/></svg>
<div class="a" style="left:295px;top:997px;width:1467px;height:26px;background:#000"></div>
<div class="a" style="left:295px;top:997px;width:1467px;height:13px;background:linear-gradient(#303030,#1c1c1c)"></div>
<div class="a" style="left:881px;top:997px;width:294px;height:25px;background:linear-gradient(#5a5a5a,#3a3a3a 40%,#303030)"></div>
<div class="a" style="left:881px;top:1010px;width:294px;height:12px;background:radial-gradient(ellipse 45% 100% at 50% 100%,rgba(200,190,0,0.75) 0%,rgba(160,150,0,0.35) 50%,rgba(0,0,0,0) 100%)"></div>
<div class="a" style="left:881px;top:997px;width:1px;height:25px;background:#888"></div>
<div class="a" style="left:1174px;top:997px;width:1px;height:25px;background:#888"></div>
<div class="a" style="left:1028px;top:997px;width:1.5px;height:25px;background:#f0e000"></div>
<svg style="left:295px;top:997px" width="1467" height="10">
<rect x="6.7" y="1" width="1.2" height="2.5" fill="#8a8a8a"/>
<rect x="17.2" y="1" width="1.2" height="2.5" fill="#8a8a8a"/>
<rect x="27.7" y="1" width="1.2" height="2.5" fill="#8a8a8a"/>
<rect x="38.2" y="1" width="1.2" height="2.5" fill="#8a8a8a"/>
<rect x="48.7" y="1" width="1.2" height="4" fill="#8a8a8a"/>
<rect x="59.2" y="1" width="1.2" height="2.5" fill="#8a8a8a"/>
<rect x="69.7" y="1" width="1.2" height="2.5" fill="#8a8a8a"/>
<rect x="80.2" y="1" width="1.2" height="2.5" fill="#8a8a8a"/>
<rect x="90.7" y="1" width="1.2" height="2.5" fill="#8a8a8a"/>
<rect x="101.2" y="1" width="1.2" height="4" fill="#8a8a8a"/>
<rect x="111.7" y="1" width="1.2" height="2.5" fill="#8a8a8a"/>
<rect x="122.2" y="1" width="1.2" height="2.5" fill="#8a8a8a"/>
<rect x="132.7" y="1" width="1.2" height="2.5" fill="#8a8a8a"/>
<rect x="143.2" y="1" width="1.2" height="2.5" fill="#8a8a8a"/>
<rect x="153.7" y="1" width="1.2" height="4" fill="#8a8a8a"/>
<rect x="164.2" y="1" width="1.2" height="2.5" fill="#8a8a8a"/>
<rect x="174.7" y="1" width="1.2" height="2.5" fill="#8a8a8a"/>
<rect x="185.2" y="1" width="1.2" height="2.5" fill="#8a8a8a"/>
<rect x="195.7" y="1" width="1.2" height="2.5" fill="#8a8a8a"/>
<rect x="206.2" y="1" width="1.2" height="4" fill="#8a8a8a"/>
<rect x="216.7" y="1" width="1.2" height="2.5" fill="#8a8a8a"/>
<rect x="227.2" y="1" width="1.2" height="2.5" fill="#8a8a8a"/>
<rect x="237.7" y="1" width="1.2" height="2.5" fill="#8a8a8a"/>
<rect x="248.2" y="1" width="1.2" height="2.5" fill="#8a8a8a"/>
<rect x="258.7" y="1" width="1.2" height="4" fill="#8a8a8a"/>
<rect x="269.2" y="1" width="1.2" height="2.5" fill="#8a8a8a"/>
<rect x="279.7" y="1" width="1.2" height="2.5" fill="#8a8a8a"/>
<rect x="290.2" y="1" width="1.2" height="2.5" fill="#8a8a8a"/>
<rect x="300.7" y="1" width="1.2" height="2.5" fill="#8a8a8a"/>
<rect x="311.2" y="1" width="1.2" height="4" fill="#8a8a8a"/>
<rect x="321.7" y="1" width="1.2" height="2.5" fill="#8a8a8a"/>
<rect x="332.2" y="1" width="1.2" height="2.5" fill="#8a8a8a"/>
<rect x="342.7" y="1" width="1.2" height="2.5" fill="#8a8a8a"/>
<rect x="353.2" y="1" width="1.2" height="2.5" fill="#8a8a8a"/>
<rect x="363.7" y="1" width="1.2" height="4" fill="#8a8a8a"/>
<rect x="374.2" y="1" width="1.2" height="2.5" fill="#8a8a8a"/>
<rect x="384.7" y="1" width="1.2" height="2.5" fill="#8a8a8a"/>
<rect x="395.2" y="1" width="1.2" height="2.5" fill="#8a8a8a"/>
<rect x="405.7" y="1" width="1.2" height="2.5" fill="#8a8a8a"/>
<rect x="416.2" y="1" width="1.2" height="4" fill="#8a8a8a"/>
<rect x="426.7" y="1" width="1.2" height="2.5" fill="#8a8a8a"/>
<rect x="437.2" y="1" width="1.2" height="2.5" fill="#8a8a8a"/>
<rect x="447.7" y="1" width="1.2" height="2.5" fill="#8a8a8a"/>
<rect x="458.2" y="1" width="1.2" height="2.5" fill="#8a8a8a"/>
<rect x="468.7" y="1" width="1.2" height="4" fill="#8a8a8a"/>
<rect x="479.2" y="1" width="1.2" height="2.5" fill="#8a8a8a"/>
<rect x="489.7" y="1" width="1.2" height="2.5" fill="#8a8a8a"/>
<rect x="500.2" y="1" width="1.2" height="2.5" fill="#8a8a8a"/>
<rect x="510.7" y="1" width="1.2" height="2.5" fill="#8a8a8a"/>
<rect x="521.2" y="1" width="1.2" height="4" fill="#8a8a8a"/>
<rect x="531.7" y="1" width="1.2" height="2.5" fill="#8a8a8a"/>
<rect x="542.2" y="1" width="1.2" height="2.5" fill="#8a8a8a"/>
<rect x="552.7" y="1" width="1.2" height="2.5" fill="#8a8a8a"/>
<rect x="563.2" y="1" width="1.2" height="2.5" fill="#8a8a8a"/>
<rect x="573.7" y="1" width="1.2" height="4" fill="#8a8a8a"/>
<rect x="584.2" y="1" width="1.2" height="2.5" fill="#8a8a8a"/>
<rect x="594.7" y="1" width="1.2" height="2.5" fill="#8a8a8a"/>
<rect x="605.2" y="1" width="1.2" height="2.5" fill="#8a8a8a"/>
<rect x="615.7" y="1" width="1.2" height="2.5" fill="#8a8a8a"/>
<rect x="626.2" y="1" width="1.2" height="4" fill="#8a8a8a"/>
<rect x="636.7" y="1" width="1.2" height="2.5" fill="#8a8a8a"/>
<rect x="647.2" y="1" width="1.2" height="2.5" fill="#8a8a8a"/>
<rect x="657.7" y="1" width="1.2" height="2.5" fill="#8a8a8a"/>
<rect x="668.2" y="1" width="1.2" height="2.5" fill="#8a8a8a"/>
<rect x="678.7" y="1" width="1.2" height="4" fill="#8a8a8a"/>
<rect x="689.2" y="1" width="1.2" height="2.5" fill="#8a8a8a"/>
<rect x="699.7" y="1" width="1.2" height="2.5" fill="#8a8a8a"/>
<rect x="710.2" y="1" width="1.2" height="2.5" fill="#8a8a8a"/>
<rect x="720.7" y="1" width="1.2" height="2.5" fill="#8a8a8a"/>
<rect x="731.2" y="1" width="1.2" height="4" fill="#8a8a8a"/>
<rect x="741.7" y="1" width="1.2" height="2.5" fill="#8a8a8a"/>
<rect x="752.2" y="1" width="1.2" height="2.5" fill="#8a8a8a"/>
<rect x="762.7" y="1" width="1.2" height="2.5" fill="#8a8a8a"/>
<rect x="773.2" y="1" width="1.2" height="2.5" fill="#8a8a8a"/>
<rect x="783.7" y="1" width="1.2" height="4" fill="#8a8a8a"/>
<rect x="794.2" y="1" width="1.2" height="2.5" fill="#8a8a8a"/>
<rect x="804.7" y="1" width="1.2" height="2.5" fill="#8a8a8a"/>
<rect x="815.2" y="1" width="1.2" height="2.5" fill="#8a8a8a"/>
<rect x="825.7" y="1" width="1.2" height="2.5" fill="#8a8a8a"/>
<rect x="836.2" y="1" width="1.2" height="4" fill="#8a8a8a"/>
<rect x="846.7" y="1" width="1.2" height="2.5" fill="#8a8a8a"/>
<rect x="857.2" y="1" width="1.2" height="2.5" fill="#8a8a8a"/>
<rect x="867.7" y="1" width="1.2" height="2.5" fill="#8a8a8a"/>
<rect x="878.2" y="1" width="1.2" height="2.5" fill="#8a8a8a"/>
<rect x="888.7" y="1" width="1.2" height="4" fill="#8a8a8a"/>
<rect x="899.2" y="1" width="1.2" height="2.5" fill="#8a8a8a"/>
<rect x="909.7" y="1" width="1.2" height="2.5" fill="#8a8a8a"/>
<rect x="920.2" y="1" width="1.2" height="2.5" fill="#8a8a8a"/>
<rect x="930.7" y="1" width="1.2" height="2.5" fill="#8a8a8a"/>
<rect x="941.2" y="1" width="1.2" height="4" fill="#8a8a8a"/>
<rect x="951.7" y="1" width="1.2" height="2.5" fill="#8a8a8a"/>
<rect x="962.2" y="1" width="1.2" height="2.5" fill="#8a8a8a"/>
<rect x="972.7" y="1" width="1.2" height="2.5" fill="#8a8a8a"/>
<rect x="983.2" y="1" width="1.2" height="2.5" fill="#8a8a8a"/>
<rect x="993.7" y="1" width="1.2" height="4" fill="#8a8a8a"/>
<rect x="1004.2" y="1" width="1.2" height="2.5" fill="#8a8a8a"/>
<rect x="1014.7" y="1" width="1.2" height="2.5" fill="#8a8a8a"/>
<rect x="1025.2" y="1" width="1.2" height="2.5" fill="#8a8a8a"/>
<rect x="1035.7" y="1" width="1.2" height="2.5" fill="#8a8a8a"/>
<rect x="1046.2" y="1" width="1.2" height="4" fill="#8a8a8a"/>
<rect x="1056.7" y="1" width="1.2" height="2.5" fill="#8a8a8a"/>
<rect x="1067.2" y="1" width="1.2" height="2.5" fill="#8a8a8a"/>
<rect x="1077.7" y="1" width="1.2" height="2.5" fill="#8a8a8a"/>
<rect x="1088.2" y="1" width="1.2" height="2.5" fill="#8a8a8a"/>
<rect x="1098.7" y="1" width="1.2" height="4" fill="#8a8a8a"/>
<rect x="1109.2" y="1" width="1.2" height="2.5" fill="#8a8a8a"/>
<rect x="1119.7" y="1" width="1.2" height="2.5" fill="#8a8a8a"/>
<rect x="1130.2" y="1" width="1.2" height="2.5" fill="#8a8a8a"/>
<rect x="1140.7" y="1" width="1.2" height="2.5" fill="#8a8a8a"/>
<rect x="1151.2" y="1" width="1.2" height="4" fill="#8a8a8a"/>
<rect x="1161.7" y="1" width="1.2" height="2.5" fill="#8a8a8a"/>
<rect x="1172.2" y="1" width="1.2" height="2.5" fill="#8a8a8a"/>
<rect x="1182.7" y="1" width="1.2" height="2.5" fill="#8a8a8a"/>
<rect x="1193.2" y="1" width="1.2" height="2.5" fill="#8a8a8a"/>
<rect x="1203.7" y="1" width="1.2" height="4" fill="#8a8a8a"/>
<rect x="1214.2" y="1" width="1.2" height="2.5" fill="#8a8a8a"/>
<rect x="1224.7" y="1" width="1.2" height="2.5" fill="#8a8a8a"/>
<rect x="1235.2" y="1" width="1.2" height="2.5" fill="#8a8a8a"/>
<rect x="1245.7" y="1" width="1.2" height="2.5" fill="#8a8a8a"/>
<rect x="1256.2" y="1" width="1.2" height="4" fill="#8a8a8a"/>
<rect x="1266.7" y="1" width="1.2" height="2.5" fill="#8a8a8a"/>
<rect x="1277.2" y="1" width="1.2" height="2.5" fill="#8a8a8a"/>
<rect x="1287.7" y="1" width="1.2" height="2.5" fill="#8a8a8a"/>
<rect x="1298.2" y="1" width="1.2" height="2.5" fill="#8a8a8a"/>
<rect x="1308.7" y="1" width="1.2" height="4" fill="#8a8a8a"/>
<rect x="1319.2" y="1" width="1.2" height="2.5" fill="#8a8a8a"/>
<rect x="1329.7" y="1" width="1.2" height="2.5" fill="#8a8a8a"/>
<rect x="1340.2" y="1" width="1.2" height="2.5" fill="#8a8a8a"/>
<rect x="1350.7" y="1" width="1.2" height="2.5" fill="#8a8a8a"/>
<rect x="1361.2" y="1" width="1.2" height="4" fill="#8a8a8a"/>
<rect x="1371.7" y="1" width="1.2" height="2.5" fill="#8a8a8a"/>
<rect x="1382.2" y="1" width="1.2" height="2.5" fill="#8a8a8a"/>
<rect x="1392.7" y="1" width="1.2" height="2.5" fill="#8a8a8a"/>
<rect x="1403.2" y="1" width="1.2" height="2.5" fill="#8a8a8a"/>
<rect x="1413.7" y="1" width="1.2" height="4" fill="#8a8a8a"/>
<rect x="1424.2" y="1" width="1.2" height="2.5" fill="#8a8a8a"/>
<rect x="1434.7" y="1" width="1.2" height="2.5" fill="#8a8a8a"/>
<rect x="1445.2" y="1" width="1.2" height="2.5" fill="#8a8a8a"/>
<rect x="1455.7" y="1" width="1.2" height="2.5" fill="#8a8a8a"/>
<rect x="1466.2" y="1" width="1.2" height="4" fill="#8a8a8a"/>
</svg>
<div class="t c" style="left:396.8px;top:1007.5px;font-size:12.5px;color:#d8d8d8">433.400</div>
<div class="t c" style="left:501.9px;top:1007.5px;font-size:12.5px;color:#d8d8d8">433.500</div>
<div class="t c" style="left:606.9px;top:1007.5px;font-size:12.5px;color:#d8d8d8">433.600</div>
<div class="t c" style="left:712.0px;top:1007.5px;font-size:12.5px;color:#d8d8d8">433.700</div>
<div class="t c" style="left:817.1px;top:1007.5px;font-size:12.5px;color:#d8d8d8">433.800</div>
<div class="t c" style="left:922.1px;top:1007.5px;font-size:12.5px;color:#d8d8d8">433.900</div>
<div class="t c" style="left:1027.2px;top:1007.5px;font-size:12.5px;color:#d8d8d8">434.000</div>
<div class="t c" style="left:1132.3px;top:1007.5px;font-size:12.5px;color:#d8d8d8">434.100</div>
<div class="t c" style="left:1237.4px;top:1007.5px;font-size:12.5px;color:#d8d8d8">434.200</div>
<div class="t c" style="left:1342.4px;top:1007.5px;font-size:12.5px;color:#d8d8d8">434.300</div>
<div class="t c" style="left:1447.5px;top:1007.5px;font-size:12.5px;color:#d8d8d8">434.400</div>
<div class="t c" style="left:1552.6px;top:1007.5px;font-size:12.5px;color:#d8d8d8">434.500</div>
<div class="t c" style="left:1657.6px;top:1007.5px;font-size:12.5px;color:#d8d8d8">434.600</div>
<div class="a" style="left:1763px;top:998px;width:37px;height:24px;background:#e1e1e1;border:1px solid #adadad"></div>
<svg style="left:1772px;top:1002px" width="20" height="16"><rect x="1" y="5" width="16" height="9" fill="#f4f4f4" stroke="#333" stroke-width="1"/><path d="M3 8 h12 M3 10 h12 M5 12 h8" stroke="#444" stroke-width="1" stroke-dasharray="1 0.6"/><path d="M9 5 v-2 l3 -2" stroke="#333" fill="none" stroke-width="0.8"/></svg>
<div class="a" style="left:1802px;top:998px;width:50px;height:24px;background:#e1e1e1;border:1px solid #adadad"></div>
<div class="t" style="left:1811px;top:1004px;font-size:11.5px">x5</div>
<div class="a" style="left:1839px;top:1006px;border-top:4px solid transparent;border-bottom:4px solid transparent;border-left:4px solid #000"></div>
<div class="a" style="left:1854px;top:998px;width:24px;height:24px;background:#e1e1e1;border:1px solid #adadad"></div>
<svg style="left:1856px;top:1001px" width="20" height="20"><circle cx="10" cy="9.5" r="7.3" fill="#f4f4f4" stroke="#333" stroke-width="1.3"/><path d="M7 6 L10.5 9.5 L7 13z M10.5 6 L14 9.5 L10.5 13z" fill="#222"/></svg>
<div id="status" class="a"></div><div class="a" style="left:0;top:1023px;width:1920px;height:1px;background:#fafafa"></div>
<div class="t" style="left:9px;top:1031px;font-size:10.7px;color:#666">SDRPlay RSP1, BW = 1.000 MHz</div>
<div class="t" style="left:1448px;top:1031px;font-size:11px">CPU: 1.0%</div>
<div class="a" style="left:1513px;top:1030px;width:69px;height:12px;background:#e6e6e6;border:1px solid #bcbcbc"></div>
<div class="t" style="left:1596.5px;top:1031px;font-size:11px">Audio: 18ms</div>
<div class="a" style="left:1674px;top:1030px;width:69px;height:12px;background:#e6e6e6;border:1px solid #bcbcbc"></div>
<div class="a" style="left:1676px;top:1032px;width:20px;height:8px;background:#06b025"></div>
<div class="t" style="left:1758px;top:1031px;font-size:11px">Size: 589.1 MB</div>
<div class="a" style="left:1846px;top:1030px;width:68px;height:12px;background:#e6e6e6;border:1px solid #bcbcbc"></div>
<div class="a" style="left:1848px;top:1032px;width:1px;height:8px;background:#06b025"></div></body></html>
